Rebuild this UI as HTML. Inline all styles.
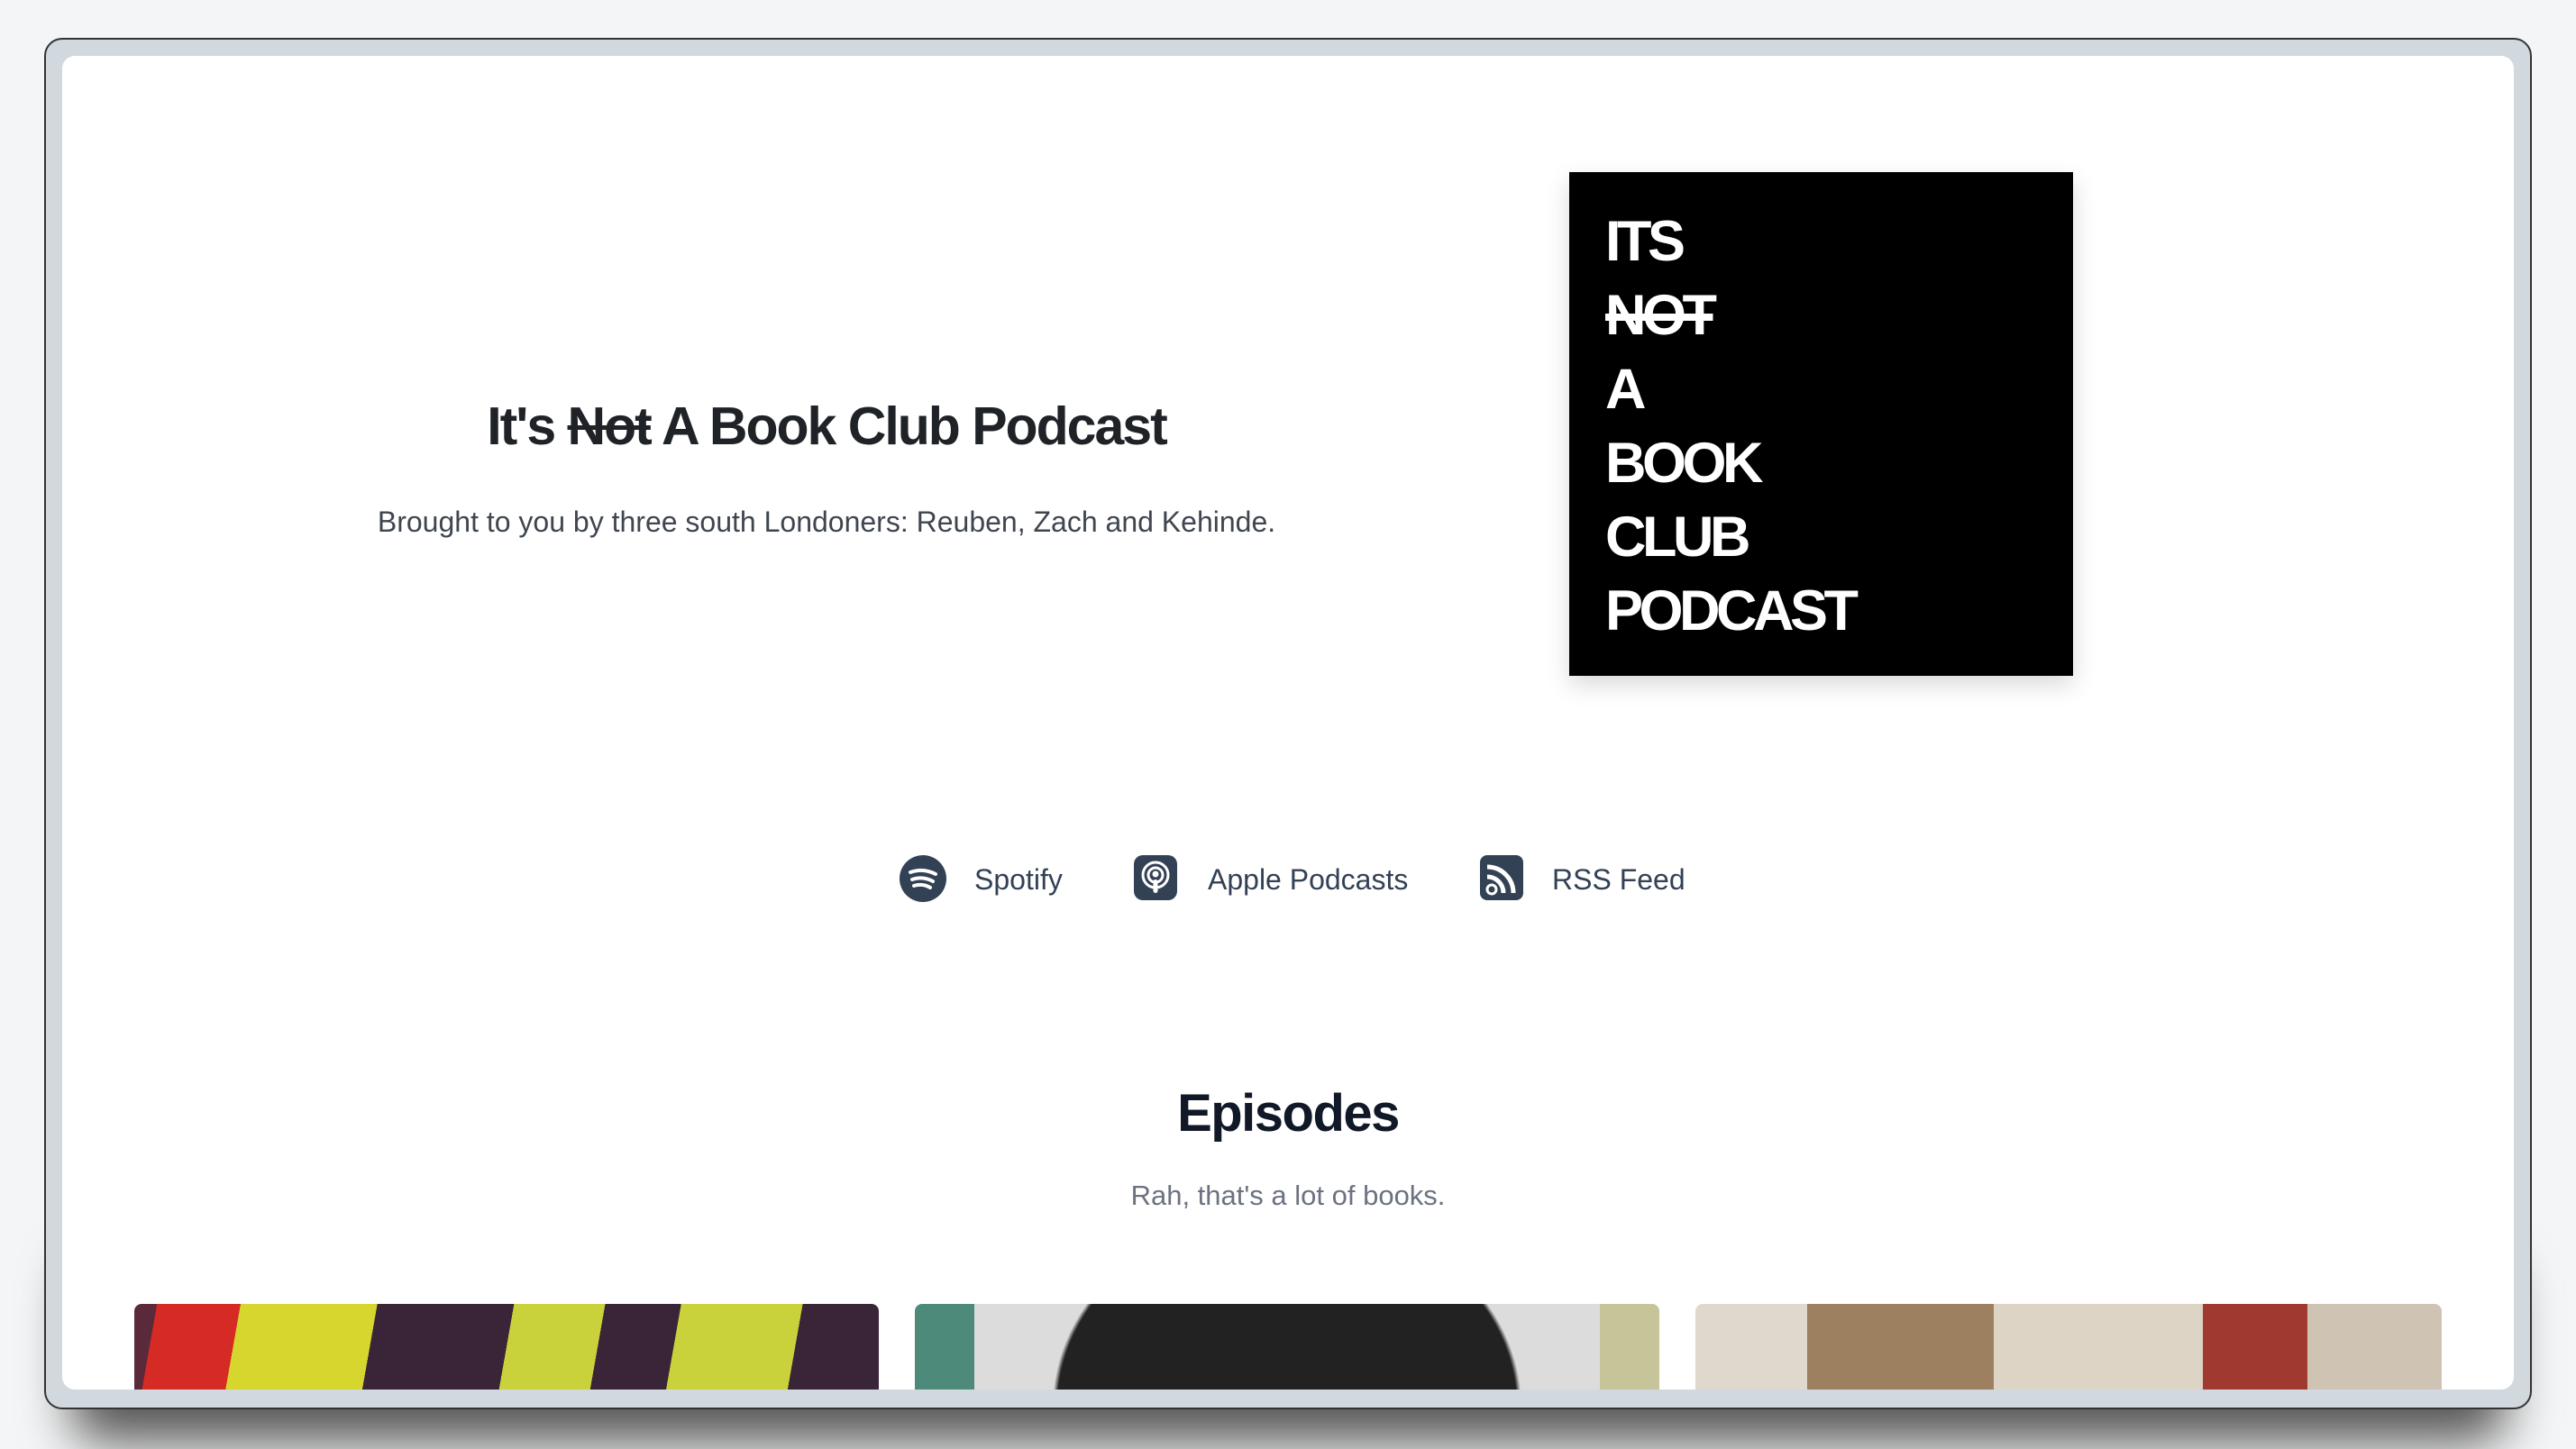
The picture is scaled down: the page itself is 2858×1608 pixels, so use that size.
<!DOCTYPE html>
<html><head><meta charset="utf-8"><style>
*{margin:0;padding:0;box-sizing:border-box}
body{width:2858px;height:1608px;background:#f4f5f6;position:relative;overflow:hidden;font-family:"Liberation Sans",sans-serif}
.sh{position:absolute;left:80px;top:1400px;width:2700px;height:200px;border-radius:30px;background:#555;filter:blur(28px)}
.frame{position:absolute;left:49px;top:42px;width:2760px;height:1522px;background:#d1d9df;border-radius:20px;border:2px solid #333}
.inner{position:absolute;left:69px;top:62px;width:2720px;height:1480px;background:#fff;border-radius:14px;overflow:hidden}
.abs{position:absolute}
h1{position:absolute;left:0;width:1834px;top:439px;text-align:center;font-size:59px;font-weight:bold;color:#1f2328;letter-spacing:-2px}
.sub{position:absolute;left:0;width:1834px;top:561px;text-align:center;font-size:32px;color:#3f4650}
.logo{position:absolute;left:1741px;top:191px;width:559px;height:559px;background:#000;box-shadow:0 10px 25px rgba(0,0,0,.15)}
.logo div{position:absolute;left:40px;color:#fff;font-weight:bold;font-size:63px;letter-spacing:-4.5px;line-height:1}
.links a{position:absolute;top:956px;font-size:32px;color:#334155;text-decoration:none;font-weight:500;line-height:40px}
.ep{position:absolute;left:0;width:2858px;top:1202px;text-align:center;font-size:58px;font-weight:bold;color:#111827;letter-spacing:-1.5px}
.rah{position:absolute;left:0;width:2858px;top:1309px;text-align:center;font-size:31px;color:#6b7280}
.card{position:absolute;top:1447px;height:95px;border-radius:8px 8px 0 0}
</style></head><body>
<div class="sh"></div>
<div class="frame"></div>
<div class="inner"></div>
<h1>It's <s>Not</s> A Book Club Podcast</h1>
<div class="sub">Brought to you by three south Londoners: Reuben, Zach and Kehinde.</div>
<div class="logo">
<div style="top:46px">ITS</div>
<div style="top:128px"><s style="text-decoration-thickness:8px">NOT</s></div>
<div style="top:210px">A</div>
<div style="top:292px">BOOK</div>
<div style="top:374px">CLUB</div>
<div style="top:456px">PODCAST</div>
</div>
<div class="links">
<svg class="abs" style="left:998px;top:949px" width="52" height="52" viewBox="0 0 52 52"><circle cx="26" cy="26" r="26" fill="#334155"/><path d="M12 19q14-5 28 2M14 27q12-4 23 2M16 34q10-3 18 2" stroke="#fff" stroke-width="4" fill="none" stroke-linecap="round"/></svg>
<a style="left:1081px">Spotify</a>
<svg class="abs" style="left:1258px;top:949px" width="48" height="50" viewBox="0 0 48 50"><rect width="48" height="50" rx="10" fill="#334155"/><circle cx="24" cy="22" r="14" stroke="#fff" stroke-width="3" fill="none"/><circle cx="24" cy="22" r="8" stroke="#fff" stroke-width="3" fill="none"/><circle cx="24" cy="21" r="3.5" fill="#fff"/><rect x="21.5" y="27" width="5" height="15" rx="2.5" fill="#fff"/></svg>
<a style="left:1340px">Apple Podcasts</a>
<svg class="abs" style="left:1642px;top:949px" width="48" height="50" viewBox="0 0 48 50"><rect width="48" height="50" rx="8" fill="#334155"/><circle cx="13" cy="38" r="5" stroke="#fff" stroke-width="3" fill="none"/><path d="M8 24a18 18 0 0 1 18 18M8 13a29 29 0 0 1 29 29" stroke="#fff" stroke-width="5" fill="none"/></svg>
<a style="left:1722px">RSS Feed</a>
</div>
<div class="ep">Episodes</div>
<div class="rah">Rah, that's a lot of books.</div>
<div class="card" style="left:149px;width:826px;background:linear-gradient(100deg,#5a2a3a 0 3%,#d62a24 3% 14%,#d6d62e 14% 32%,#3a2438 32% 50%,#c9d23a 50% 62%,#3a2438 62% 72%,#c9d23a 72% 88%,#3a2438 88%)"></div>
<div class="card" style="left:1015px;width:826px;background:radial-gradient(ellipse 260px 220px at 50% 120%,#222 98%,transparent 100%),linear-gradient(90deg,#4e8a7a 0 8%,#dcdcdc 8% 92%,#c8c49a 92%)"></div>
<div class="card" style="left:1881px;width:828px;background:linear-gradient(90deg,#e0d8cc 0 15%,#9c8060 15% 40%,#ddd4c6 40% 68%,#a03a30 68% 82%,#cfc4b4 82%)"></div>
</body></html>
